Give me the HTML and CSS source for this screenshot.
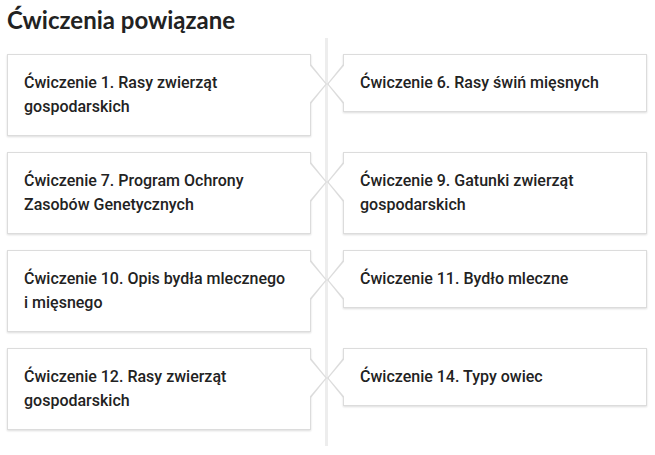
FILE: index.html
```html
<!DOCTYPE html>
<html lang="pl">
<head>
<meta charset="utf-8">
<title>Ćwiczenia powiązane</title>
<link rel="stylesheet" href="styles.css">
</head>
<body>
<main class="page">
  <h1 class="title">Ćwiczenia powiązane</h1>
  <div class="timeline">
    <a class="card card-left">Ćwiczenie 1. Rasy zwierząt gospodarskich</a>
    <a class="card card-right">Ćwiczenie 6. Rasy świń mięsnych</a>
    <a class="card card-left">Ćwiczenie 7. Program Ochrony Zasobów Genetycznych</a>
    <a class="card card-right">Ćwiczenie 9. Gatunki zwierząt gospodarskich</a>
    <a class="card card-left">Ćwiczenie 10. Opis bydła mlecznego i mięsnego</a>
    <a class="card card-right">Ćwiczenie 11. Bydło mleczne</a>
    <a class="card card-left">Ćwiczenie 12. Rasy zwierząt gospodarskich</a>
    <a class="card card-right">Ćwiczenie 14. Typy owiec</a>
  </div>
</main>
</body>
</html>
```

FILE: styles.css
```css
html, body {
  margin: 0;
  padding: 0;
  background: #fff;
}

.page {
  padding: 0 8px 0 7px;
}

.title {
  margin: 6px 0 4px 0;
  font-family: Lato, "Open Sans", sans-serif;
  font-weight: 700;
  font-size: 24px;
  line-height: 28px;
  color: #222;
}

.timeline {
  position: relative;
  display: grid;
  grid-template-columns: 304px 304px;
  column-gap: 32px;
  row-gap: 16px;
  align-items: start;
  padding: 16px 0;
}

.timeline::before {
  content: "";
  position: absolute;
  top: 0;
  bottom: 0;
  left: 318px;
  width: 3px;
  background: #ededed;
}

.card {
  position: relative;
  display: block;
  box-sizing: border-box;
  padding: 16px 24px 16px 16px;
  border: 1px solid #dcdcdc;
  background: #fff;
  box-shadow: 0 1px 2px rgba(0, 0, 0, 0.14);
  font-family: Roboto, "Noto Sans", sans-serif;
  font-weight: 500;
  font-size: 16px;
  line-height: 24px;
  color: #222;
  text-decoration: none;
}

.card::before,
.card::after {
  content: "";
  position: absolute;
}

.card-left::before {
  right: -17px;
  top: 8px;
  width: 17px;
  height: 42px;
  background: #dcdcdc;
  clip-path: polygon(0 0, 100% 50%, 0 100%);
}

.card-left::after {
  right: -15.5px;
  top: 9.5px;
  width: 16.5px;
  height: 39px;
  background: #fff;
  clip-path: polygon(0 0, 100% 50%, 0 100%);
}

.card-right::before {
  left: -17px;
  top: 8px;
  width: 17px;
  height: 42px;
  background: #dcdcdc;
  clip-path: polygon(100% 0, 0 50%, 100% 100%);
}

.card-right::after {
  left: -15.5px;
  top: 9.5px;
  width: 16.5px;
  height: 39px;
  background: #fff;
  clip-path: polygon(100% 0, 0 50%, 100% 100%);
}
```
